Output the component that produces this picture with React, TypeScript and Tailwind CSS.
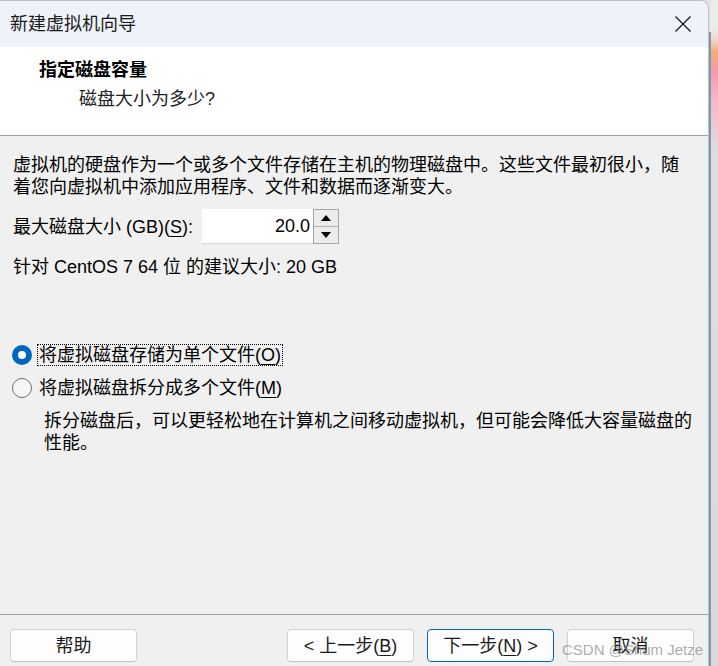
import type { ReactNode } from 'react';

const FONT = "font-['Liberation_Sans','Noto_Sans_CJK_SC',sans-serif]";

function Key({ children }: { children: ReactNode }) {
  return <span className="underline underline-offset-[3px]">{children}</span>;
}

function Button({ children, primary }: { children: ReactNode; primary?: boolean }) {
  return (
    <button
      className={
        primary
          ? 'w-[127px] h-[33px] rounded-[4px] border border-[#0067c0] bg-[#fdfdfd] text-[18px] leading-[22px] text-[#1a1a1a] flex items-center justify-center'
          : 'w-[127px] h-[33px] rounded-[4px] border border-[#d2d2d2] border-b-[#c2c2c2] bg-[#fdfdfd] text-[18px] leading-[22px] text-[#1a1a1a] flex items-center justify-center'
      }
    >
      {children}
    </button>
  );
}

function Radio({ checked }: { checked?: boolean }) {
  return checked ? (
    <span className="w-[20px] h-[20px] rounded-full bg-[#0067c0] flex items-center justify-center shrink-0">
      <span className="w-[8px] h-[8px] rounded-full bg-white" />
    </span>
  ) : (
    <span className="w-[20px] h-[20px] rounded-full border border-[#6f6f6f] bg-[#f6f6f6] shrink-0" />
  );
}

function CloseIcon() {
  return (
    <svg width="18" height="18" viewBox="0 0 18 18" fill="none" stroke="#1a1a1a" strokeWidth={1.3}>
      <path d="M1.5 1.5l15 15M16.5 1.5l-15 15" />
    </svg>
  );
}

export default function App() {
  return (
    <div className={`w-[718px] h-[666px] flex overflow-hidden bg-[#e6e6e6] ${FONT}`}>
      <div className="relative w-[709px] h-full flex flex-col bg-[#f0f0f0] border-r border-t border-[#b9bfc5] rounded-tr-[8px] overflow-hidden">
        {/* Title bar */}
        <div className="h-[46px] shrink-0 bg-[#eef2f9] flex items-center justify-between pl-[10px] pr-[16px]">
          <span className="text-[18px] leading-[22px] text-[#1a1a1a]">新建虚拟机向导</span>
          <CloseIcon />
        </div>

        {/* Header */}
        <div className="h-[89px] shrink-0 bg-white border-b border-[#a0a0a0] pt-[12px]">
          <div className="pl-[39px] text-[18px] leading-[22px] font-bold text-black">指定磁盘容量</div>
          <div className="pl-[79px] mt-[7px] text-[18px] leading-[22px] text-[#222]">磁盘大小为多少?</div>
        </div>

        {/* Body */}
        <div className="flex-1 flex flex-col pt-[18px] pl-[13px] pr-[12px] text-[18px] leading-[22px] text-black">
          <p>
            虚拟机的硬盘作为一个或多个文件存储在主机的物理磁盘中。这些文件最初很小，随
            <br />
            着您向虚拟机中添加应用程序、文件和数据而逐渐变大。
          </p>

          <div className="mt-[11px] flex items-center h-[35px]">
            <span className="w-[189px]">
              最大磁盘大小 (GB)(<Key>S</Key>):
            </span>
            <div className="w-[111px] h-[35px] bg-white border-b border-[#d8d8d8] flex items-center justify-end pr-[3px]">
              20.0
            </div>
            <div className="w-[26px] h-[35px] border border-[#a6a6a6] flex flex-col bg-[#ececec]">
              <div className="flex-1 border-b border-[#b4b4b4] flex items-center justify-center">
                <span className="w-0 h-0 border-l-[5px] border-r-[5px] border-b-[6px] border-l-transparent border-r-transparent border-b-black" />
              </div>
              <div className="flex-1 flex items-center justify-center">
                <span className="w-0 h-0 border-l-[5px] border-r-[5px] border-t-[6px] border-l-transparent border-r-transparent border-t-black" />
              </div>
            </div>
          </div>

          <div className="mt-[12px]">针对 CentOS 7 64 位 的建议大小: 20 GB</div>

          <div className="mt-[66px] flex items-center -ml-[1px]">
            <Radio checked />
            <span className="ml-[5px] border border-dotted border-black px-[1px] leading-[20px]">
              将虚拟磁盘存储为单个文件(<Key>O</Key>)
            </span>
          </div>
          <div className="mt-[11px] flex items-center -ml-[1px]">
            <Radio />
            <span className="ml-[6px] px-[1px] leading-[22px]">
              将虚拟磁盘拆分成多个文件(<Key>M</Key>)
            </span>
          </div>
          <p className="mt-[11px] pl-[31px]">
            拆分磁盘后，可以更轻松地在计算机之间移动虚拟机，但可能会降低大容量磁盘的
            <br />
            性能。
          </p>
        </div>

        {/* Footer */}
        <div className="h-[52px] shrink-0 border-t border-[#a0a0a0] flex items-start pt-[14px] pl-[10px] pr-[14px]">
          <Button>帮助</Button>
          <div className="ml-auto flex gap-[13px]">
            <Button>
              &lt; 上一步(<Key>B</Key>)
            </Button>
            <Button primary>
              下一步(<Key>N</Key>) &gt;
            </Button>
            <Button>取消</Button>
          </div>
        </div>

        {/* Watermark */}
        <span className="absolute left-[562px] top-[640px] text-[15px] leading-[18px] text-[#8a8a8a]/70 font-['Liberation_Sans',sans-serif]">
          CSDN @Shum Jetze
        </span>
      </div>

      {/* Desktop strip */}
      <div className="w-[2px] h-full flex flex-col">
        <div className="h-[32px] bg-[#e4e4e4]" />
        <div className="flex-1 bg-[#7f98aa]" />
      </div>
      <div className="flex-1 h-full bg-[linear-gradient(to_bottom,#ececec_0px,#ececec_28px,#f5d4cc_40px,#f2ad78_52px,#f59aa9_72px,#f3b8c9_100px,#dedede_150px,#d9d9d9_100%)]" />
    </div>
  );
}
